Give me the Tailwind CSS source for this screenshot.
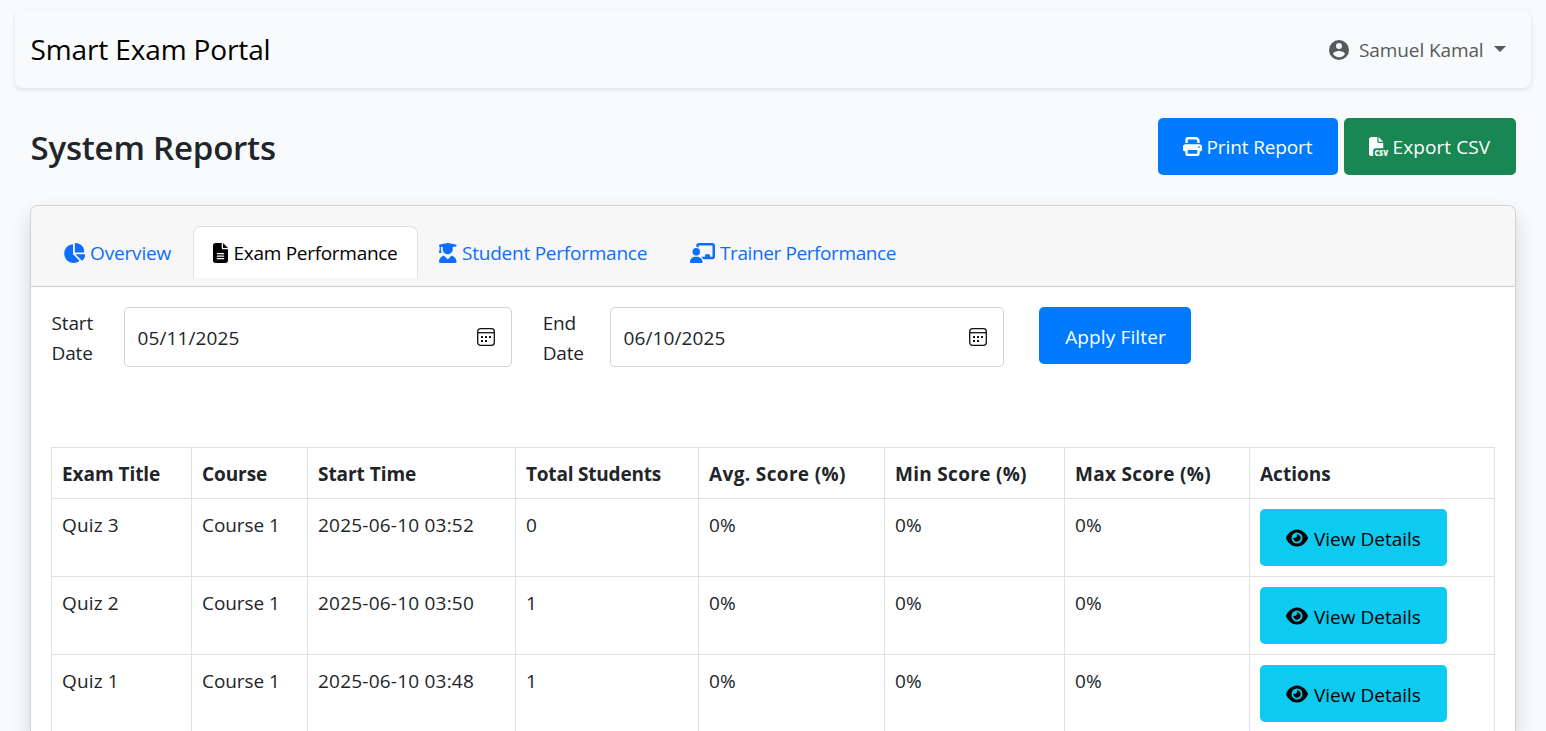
<!DOCTYPE html>
<html lang="en">
<head>
<meta charset="utf-8">
<title>Smart Exam Portal</title>
<script src="https://cdn.jsdelivr.net/npm/@tailwindcss/browser@4"></script>
</head>
<body class="h-[731px] overflow-hidden bg-[#f8fafc] px-[15px] pt-[10px] font-['Open_Sans',sans-serif] text-[19px] leading-[30px] text-[#212529]">
<svg class="hidden">
  <symbol id="eye" viewBox="0 0 576 512"><path d="M288 32c-80.8 0-145.5 36.8-192.6 80.6C48.6 156 17.3 208 2.5 243.7c-3.3 7.9-3.3 16.7 0 24.6C17.3 304 48.6 356 95.4 399.4C142.5 443.2 207.2 480 288 480s145.5-36.8 192.6-80.6c46.8-43.5 78.1-95.4 93-131.1c3.3-7.9 3.3-16.7 0-24.6c-14.9-35.7-46.2-87.7-93-131.1C433.5 68.8 368.8 32 288 32zM144 256a144 144 0 1 1 288 0 144 144 0 1 1 -288 0zm144-64c0 35.3-28.7 64-64 64c-7.1 0-13.9-1.2-20.3-3.3c-5.5-1.8-11.9 1.6-11.7 7.4c.3 6.9 1.3 13.8 3.2 20.7c13.7 51.2 66.4 81.6 117.6 67.9s81.6-66.4 67.9-117.6c-11.1-41.5-47.8-69.4-88.6-71.1c-5.8-.2-9.2 6.1-7.4 11.7c2.1 6.4 3.3 13.2 3.3 20.3z"/></symbol>
  <symbol id="cal" viewBox="0 0 18 18"><rect x=".7" y=".7" width="16.6" height="16.6" rx="2.8" fill="none" stroke="#111" stroke-width="1.3"/><path d="M1 4.7h16" stroke="#111" stroke-width="1.3"/><g fill="#000"><rect x="4" y="8" width="2" height="2" rx=".5"/><rect x="8" y="8" width="2" height="2" rx=".5"/><rect x="12" y="8" width="2" height="2" rx=".5"/><rect x="4" y="12" width="2" height="2" rx=".5"/><rect x="8" y="12" width="2" height="2" rx=".5"/></g></symbol>
</svg>

<nav class="flex h-[78px] items-center justify-between rounded-[8px] bg-[#f8fafc] pr-[25px] pl-[15.5px] shadow-[0_2px_5px_rgba(0,0,0,0.1)]">
  <span class="text-[28px] leading-[40px] tracking-[-0.13px] text-black">Smart Exam Portal</span>
  <div class="flex items-center pt-px text-[#58595b]">
    <svg class="mr-[8px] size-[24px]" viewBox="0 0 24 24" fill="currentColor"><path d="M12 19.2c-2.5 0-4.71-1.28-6-3.2.03-2 4-3.1 6-3.1s5.97 1.1 6 3.1a7.2 7.2 0 0 1-6 3.2M12 5a3 3 0 0 1 3 3 3 3 0 0 1-3 3 3 3 0 0 1-3-3 3 3 0 0 1 3-3m0-3A10 10 0 0 0 2 12a10 10 0 0 0 10 10 10 10 0 0 0 10-10A10 10 0 0 0 12 2Z"/></svg>
    <span class="w-[135px] pt-px tracking-[-0.1px]">Samuel Kamal</span>
    <span class="-mt-[2px] border-x-[6px] border-t-[6px] border-x-transparent border-t-[#58595b]"></span>
  </div>
</nav>

<main class="px-[15px] pt-[30px]">
  <div class="flex h-[57px] items-center justify-between">
    <h2 class="pt-[2px] pl-[0.5px] text-[33px] leading-[42px] font-semibold tracking-[-0.2px]">System Reports</h2>
    <div class="flex gap-[6px]">
      <button class="flex h-[57px] w-[180px] items-center rounded-[5px] bg-[#007bff] pl-[25px] text-white">
        <svg class="mr-[4.5px] size-[19px] shrink-0" viewBox="0 0 512 512" fill="currentColor"><path d="M128 0C92.7 0 64 28.7 64 64v96h64V64H354.7L384 93.3V160h64V93.3c0-17-6.7-33.3-18.7-45.3L400 18.7C388 6.7 371.7 0 354.7 0H128zM384 352v32 64H128V384 368 352H384zm64 32h32c17.7 0 32-14.3 32-32V256c0-35.3-28.7-64-64-64H64c-35.3 0-64 28.7-64 64v96c0 17.7 14.3 32 32 32H64v64c0 35.3 28.7 64 64 64H384c35.3 0 64-28.7 64-64V384zM432 248a24 24 0 1 1 0 48 24 24 0 1 1 0-48z"/></svg>
        <span class="tracking-[-0.12px]">Print Report</span>
      </button>
      <button class="flex h-[57px] w-[172px] items-center rounded-[5px] bg-[#198754] pl-[25px] text-white">
        <svg class="mr-[4.5px] size-[19px] shrink-0 overflow-visible" viewBox="0 0 512 512" fill="currentColor"><path d="M0 64C0 28.7 28.7 0 64 0H224V128c0 17.7 14.3 32 32 32H384V304H176c-35.3 0-64 28.7-64 64V512H64c-35.3 0-64-28.7-64-64V64zm384 64H256V0L384 128z"/><text x="150" y="510" font-size="225" font-weight="800" textLength="362" lengthAdjust="spacingAndGlyphs">CSV</text></svg>
        <span class="tracking-[0.1px]">Export CSV</span>
      </button>
    </div>
  </div>

  <section class="mt-[30px] h-[526px] rounded-t-[8px] border border-b-0 border-[#cfd1d2] bg-white shadow-[0_10px_20px_rgba(0,0,0,0.15)]">
    <div class="h-[81px] rounded-t-[7px] border-b border-[#cbcccd] bg-[#f7f7f7] px-[10px] pt-[20px]">
      <div class="flex h-[52px]">
        <a class="flex w-[152px] items-center pt-px pl-[21.5px] text-[#0d6efd]">
          <svg class="mr-[5px] h-[20px] w-[22.5px] shrink-0" viewBox="0 0 576 512" fill="currentColor"><path d="M304 240V16.6c0-9 7-16.6 16-16.6C443.7 0 544 100.3 544 224c0 9-7.6 16-16.6 16H304zM32 272C32 150.7 122.1 50.3 239 34.3c9.2-1.3 17 6.1 17 15.4V288L412.5 444.5c6.7 6.7 6.2 17.7-1.5 23.1C371.8 495.6 323.8 512 272 512C139.5 512 32 404.6 32 272zm526.4 16c9.3 0 16.6 7.8 15.4 17c-7.7 55.9-34.6 105.6-73.9 142.3c-6 5.6-15.4 5.2-21.2-.7L320 288H558.4z"/></svg>
          <span class="pt-px tracking-[-0.15px]">Overview</span>
        </a>
        <a class="flex w-[225px] items-center rounded-t-[8px] border border-b-0 border-[#dee2e6] bg-white pl-[19px] text-black">
          <svg class="mr-[5.5px] h-[20px] w-[15px] shrink-0" viewBox="0 0 384 512" fill="currentColor"><path d="M64 0C28.7 0 0 28.7 0 64V448c0 35.3 28.7 64 64 64H320c35.3 0 64-28.7 64-64V160H256c-17.7 0-32-14.3-32-32V0H64zM256 0V128H384L256 0zM112 256H272c8.8 0 16 7.2 16 16s-7.2 16-16 16H112c-8.8 0-16-7.2-16-16s7.2-16 16-16zm0 64H272c8.8 0 16 7.2 16 16s-7.2 16-16 16H112c-8.8 0-16-7.2-16-16s7.2-16 16-16zm0 64H272c8.8 0 16 7.2 16 16s-7.2 16-16 16H112c-8.8 0-16-7.2-16-16s7.2-16 16-16z"/></svg>
          <span class="tracking-[-0.29px] whitespace-nowrap">Exam Performance</span>
        </a>
        <a class="flex w-[250px] items-center pt-px pl-[21px] text-[#0d6efd]">
          <svg class="mr-[5.5px] h-[20px] w-[17.5px] shrink-0" viewBox="0 0 448 512" fill="currentColor"><path d="M219.3 .5c3.1-.6 6.3-.6 9.4 0l200 40C439.9 42.7 448 52.6 448 64s-8.1 21.3-19.3 23.5L352 102.9V160c0 70.7-57.3 128-128 128s-128-57.3-128-128V102.9L48 93.3v65.1l15.7 78.4c.9 4.7-.3 9.6-3.3 13.3s-7.6 5.9-12.4 5.9H16c-4.8 0-9.3-2.1-12.4-5.9s-4.3-8.6-3.3-13.3L16 158.4V86.6C6.5 83.3 0 74.3 0 64C0 52.6 8.1 42.7 19.3 40.5l200-40zM111.9 327.7c10.5-3.4 21.8 .4 29.4 8.5l71 75.5c6.3 6.7 17 6.7 23.3 0l71-75.5c7.6-8.1 18.9-11.9 29.4-8.5C401 348.6 448 409.4 448 481.3c0 17-13.8 30.7-30.7 30.7H30.7C13.8 512 0 498.2 0 481.3c0-71.9 47-132.7 111.9-153.6z"/></svg>
          <span class="pt-px tracking-[-0.23px] whitespace-nowrap">Student Performance</span>
        </a>
        <a class="flex w-[250px] items-center pt-px pl-[22px] text-[#0d6efd]">
          <svg class="mr-[5px] h-[20px] w-[25px] shrink-0" viewBox="0 0 640 512" fill="currentColor"><path d="M160 64c0-35.3 28.7-64 64-64H576c35.3 0 64 28.7 64 64V352c0 35.3-28.7 64-64 64H336.8c-11.8-25.5-29.9-47.5-52.4-64H384V320c0-17.7 14.3-32 32-32h64c17.7 0 32 14.3 32 32v32h64V64L224 64v49.1C205.2 102.2 183.3 96 160 96V64zm0 64a96 96 0 1 1 0 192 96 96 0 1 1 0-192zM133.3 352h53.3C260.3 352 320 411.7 320 485.3c0 14.7-11.9 26.7-26.7 26.7H26.7C11.9 512 0 500.1 0 485.3C0 411.7 59.7 352 133.3 352z"/></svg>
          <span class="pt-px tracking-[-0.4px] whitespace-nowrap">Trainer Performance</span>
        </a>
      </div>
    </div>

    <div class="px-[20px] pt-[20px]">
      <div class="flex h-[140px] items-start">
        <label class="w-[73px] pt-px pl-[0.5px] tracking-[-0.15px]">Start<br>Date</label>
        <div class="flex h-[60px] w-[388px] items-center justify-between rounded-[5px] border border-[#ced4da] pr-[16px] pl-[12.5px]">
          <span class="pt-[2px] tracking-[0.12px]">05/11/2025</span>
          <svg class="size-[18px]"><use href="#cal"/></svg>
        </div>
        <label class="ml-[30px] w-[68px] pt-px pl-[0.7px] tracking-[-0.15px]">End<br>Date</label>
        <div class="flex h-[60px] w-[394px] items-center justify-between rounded-[5px] border border-[#ced4da] pr-[16px] pl-[12.5px]">
          <span class="pt-[2px] tracking-[0.12px]">06/10/2025</span>
          <svg class="size-[18px]"><use href="#cal"/></svg>
        </div>
        <button class="ml-[35px] h-[57px] w-[152px] rounded-[5px] bg-[#007bff] pt-[3px] pl-px tracking-[0.13px] text-white">Apply Filter</button>
      </div>

      <table class="w-[1444px] table-fixed border-collapse text-left [&_td]:border [&_td]:border-[#dee2e6] [&_td]:px-[10px] [&_td]:pt-[11px] [&_td]:align-top [&_th]:border [&_th]:border-[#dee2e6] [&_th]:px-[10px] [&_th]:pt-px">
        <colgroup><col class="w-[140px]"><col class="w-[116px]"><col class="w-[208px]"><col class="w-[183px]"><col class="w-[186px]"><col class="w-[180px]"><col class="w-[185px]"><col class="w-[245px]"></colgroup>
        <thead>
          <tr class="h-[51px] font-bold whitespace-nowrap"><th class="tracking-[-0.05px]">Exam Title</th><th class="tracking-[-0.08px]">Course</th><th class="tracking-[-0.05px]">Start Time</th><th class="tracking-[-0.2px]">Total Students</th><th class="tracking-[0.36px]">Avg. Score (%)</th><th class="tracking-[0.3px]">Min Score (%)</th><th class="tracking-[0.29px]">Max Score (%)</th><th>Actions</th></tr>
        </thead>
        <tbody id="rows"></tbody>
      </table>
    </div>
  </section>
</main>
<script>
const rows = [['Quiz 3', '2025-06-10 03:52', 0], ['Quiz 2', '2025-06-10 03:50', 1], ['Quiz 1', '2025-06-10 03:48', 1]];
document.getElementById('rows').innerHTML = rows.map(([title, time, total]) => `
  <tr class="h-[77.5px]">
    <td class="tracking-[0.15px]">${title}</td><td class="tracking-[-0.07px]">Course 1</td><td class="tracking-[0.22px]">${time}</td><td>${total}</td>
    <td class="tracking-[0.2px]">0%</td><td class="tracking-[0.2px]">0%</td><td class="tracking-[0.2px]">0%</td>
    <td class="!pt-[10px] !pb-[10px]"><button class="flex h-[57px] w-[187px] items-center rounded-[5px] bg-[#0dcaf0] pl-[26px] text-black"><svg class="mr-[6px] h-[20px] w-[22px] shrink-0" fill="currentColor"><use href="#eye"/></svg><span class="pt-[2px]">View Details</span></button></td>
  </tr>`).join('');
</script>
</body>
</html>
